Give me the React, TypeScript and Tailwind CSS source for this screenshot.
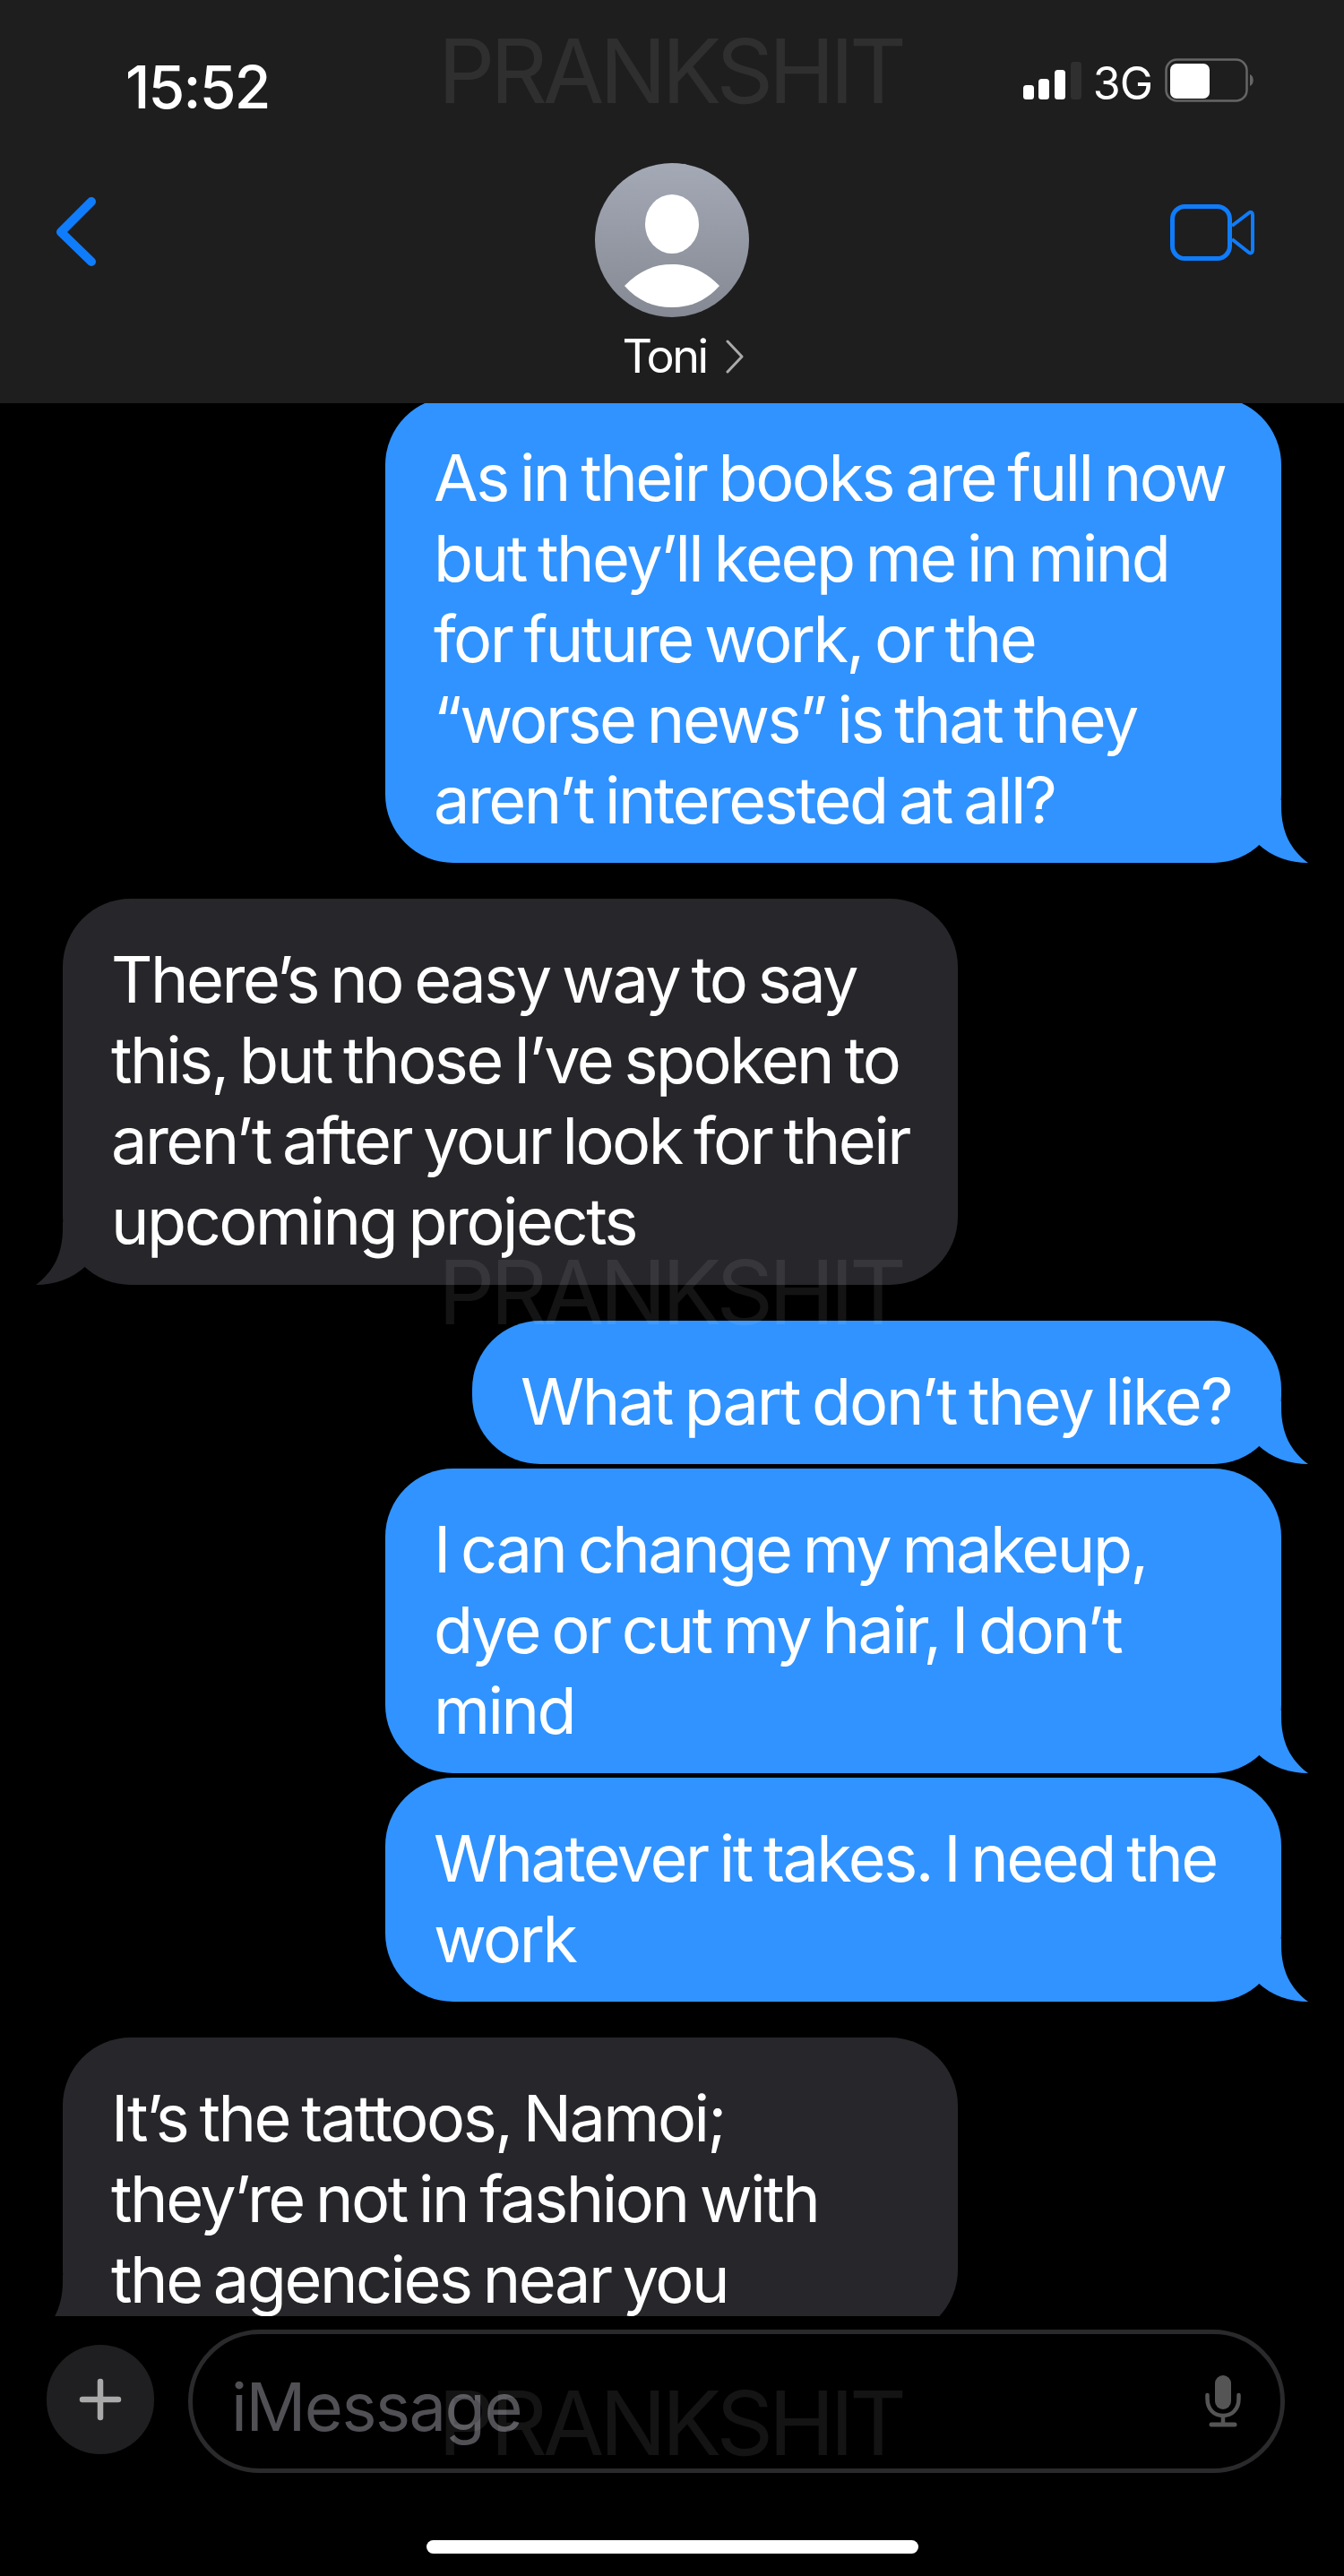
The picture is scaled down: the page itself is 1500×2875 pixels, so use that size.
const F = { fontFamily: 'Inter, "Liberation Sans", sans-serif' };

function Tail({ side, color }: { side: "left" | "right"; color: string }) {
  return (
    <svg
      className={`absolute bottom-0 ${side === "right" ? "right-[-30px]" : "left-[-30px] -scale-x-100"}`}
      width="120"
      height="70"
      viewBox="0 0 120 70"
    >
      <path d="M0 0 L90 0 L90 7 C90 35 100 55 120 70 C100 70 80 64 63 48 C52 60 30 70 7 70 L0 70 Z" fill={color} />
    </svg>
  );
}

function Bubble({ me, lines, className = "" }: { me?: boolean; lines: string[]; className?: string }) {
  const color = me ? "#3093ff" : "#26262b";
  return (
    <div
      className={`relative shrink-0 rounded-[76px] pt-[45px] pb-[25px] pl-[54px] text-[72px] leading-[90px] text-white whitespace-nowrap [word-spacing:-4.5px] ${
        me ? "self-end bg-[#3093ff]" : "self-start bg-[#26262b]"
      } ${className}`}
    >
      <Tail side={me ? "right" : "left"} color={color} />
      <div className="relative">
        {lines.map((l) => (
          <div key={l}>{l}</div>
        ))}
      </div>
    </div>
  );
}

function Watermark({ className }: { className: string }) {
  return (
    <div className={`pointer-events-none absolute left-[489px] z-20 text-[99px] leading-[100px] tracking-[-5px] text-white/[0.08] ${className}`}>
      PRANKSHIT
    </div>
  );
}

export default function App() {
  return (
    <div className="relative flex h-[2875px] w-[1500px] flex-col overflow-hidden bg-black" style={F}>
      <header className="relative z-10 h-[450px] shrink-0 bg-[#1e1e1e]">
        <div className="flex h-[180px] items-start justify-between pl-[140px] pr-[100px] pt-[60px] text-white">
          <span className="text-[66px] leading-[74px] font-medium tracking-[-1.8px]">15:52</span>
          <div className="mt-[5px] flex items-start">
            <svg width="66" height="42" viewBox="0 0 66 42" className="mt-[4px]">
              <rect x="0" y="26" width="12" height="16" rx="3.5" fill="#fff" />
              <rect x="17" y="19" width="12" height="23" rx="3.5" fill="#fff" />
              <rect x="35" y="9" width="12" height="33" rx="3.5" fill="#fff" />
              <rect x="53" y="0" width="12" height="42" rx="3.5" fill="#2f2f2f" />
            </svg>
            <span className="ml-[12px] mt-[3px] text-[50px] leading-[50px] tracking-[-1px]">3G</span>
            <svg width="100" height="49" viewBox="0 0 100 49" className="ml-[14px]">
              <rect x="1.500" y="1.500" width="90" height="46" rx="12" fill="none" stroke="#666" strokeWidth="2.500" />
              <rect x="6" y="6" width="44" height="39" rx="7" fill="#fff" />
              <path d="M95 18 C100 20 100 29 95 31 Z" fill="#666" />
            </svg>
          </div>
        </div>
        <div className="grid h-[270px] grid-cols-[1fr_auto_1fr] items-start">
          <svg width="50" height="85" viewBox="0 0 50 85" className="ml-[60px] mt-[35px]">
            <path d="M42 10 L8 44 L42 77" fill="none" stroke="#0f7cfb" strokeWidth="10" strokeLinecap="round" strokeLinejoin="round" />
          </svg>
          <div className="mt-[2px] flex flex-col items-center">
            <svg width="172" height="172" viewBox="0 0 172 172">
              <defs>
                <linearGradient id="avatar" x1="0" y1="0" x2="0" y2="1">
                  <stop offset="0" stopColor="#a4a9b6" />
                  <stop offset="1" stopColor="#858993" />
                </linearGradient>
              </defs>
              <circle cx="86" cy="86" r="86" fill="url(#avatar)" />
              <ellipse cx="86" cy="68" rx="30" ry="33" fill="#fff" />
              <path d="M33 137 C50 120 66 113 86 113 C106 113 122 120 139 137 C124 154 106 161 86 161 C66 161 48 154 33 137 Z" fill="#fff" />
            </svg>
            <div className="mt-[14px] flex items-center pl-[24px] text-[52px] leading-[60px] tracking-[-2.500px] text-white">
              Toni
              <svg width="20" height="38" viewBox="0 0 20 38" className="ml-[21px]">
                <path d="M2 2 L18 19 L2 36" fill="none" stroke="#aaa" strokeWidth="3" strokeLinecap="round" strokeLinejoin="round" />
              </svg>
            </div>
          </div>
          <svg width="96" height="63" viewBox="0 0 96 63" className="mr-[100px] mt-[48px] justify-self-end">
            <rect x="4.500" y="2.500" width="64" height="58" rx="14" fill="none" stroke="#0f7cfb" strokeWidth="5" />
            <path d="M71 24 L90 9.500 C92 8 94 9 94 12 L94 51 C94 54 92 55 90 54 L71 39" fill="none" stroke="#0f7cfb" strokeWidth="4" strokeLinejoin="round" />
          </svg>
        </div>
      </header>

      <main className="flex h-[2135px] shrink-0 flex-col overflow-hidden px-[70px]">
        <Bubble me className="mt-[-7px] w-[1000px] tracking-[-2.500px]" lines={["As in their books are full now", "but they’ll keep me in mind", "for future work, or the", "“worse news” is that they", "aren’t interested at all?"]} />
        <Bubble className="mt-[40px] h-[431px] w-[999px] tracking-[-2.500px]" lines={["There’s no easy way to say", "this, but those I’ve spoken to", "aren’t after your look for their", "upcoming projects"]} />
        <Bubble me className="mt-[40px] w-[903px] tracking-[-2.100px]" lines={["What part don’t they like?"]} />
        <Bubble me className="mt-[5px] w-[1000px] tracking-[-2.500px]" lines={["I can change my makeup,", "dye or cut my hair, I don’t", "mind"]} />
        <Bubble me className="mt-[5px] h-[250px] w-[1000px] tracking-[-2.500px]" lines={["Whatever it takes. I need the", "work"]} />
        <Bubble className="mt-[40px] h-[335px] w-[999px] tracking-[-2.500px]" lines={["It’s the tattoos, Namoi;", "they’re not in fashion with", "the agencies near you"]} />
      </main>

      <footer className="flex flex-col">
        <div className="flex items-start pl-[52px] pt-[15px]">
          <div className="mt-[17px] flex h-[122px] w-[120px] shrink-0 items-center justify-center rounded-full bg-[#1f1f21]">
            <svg width="50" height="50" viewBox="0 0 50 50">
              <path d="M25 5 V45 M5 25 H45" stroke="#a9a9a9" strokeWidth="6.500" strokeLinecap="round" />
            </svg>
          </div>
          <div className="ml-[38px] flex h-[160px] w-[1224px] items-center justify-between rounded-[80px] border-[5px] border-[#2a2a2c] pl-[43px] pr-[42px]">
            <span className="mt-[12px] text-[74px] leading-[80px] tracking-[-1.500px] text-[#505055]">iMessage</span>
            <svg width="44" height="58" viewBox="0 0 44 58">
              <rect x="13" y="0" width="18" height="38" rx="9" fill="#555" />
              <path d="M4.500 22 V26 C4.500 38 12 45 22 45 C32 45 39.500 38 39.500 26 V22" fill="none" stroke="#555" strokeWidth="4.500" strokeLinecap="round" />
              <path d="M22 45 V54" stroke="#555" strokeWidth="4.500" />
              <path d="M9 55 H35" stroke="#555" strokeWidth="5" strokeLinecap="round" />
            </svg>
          </div>
        </div>
        <div className="mx-auto mt-[75px] h-[15px] w-[549px] rounded-full bg-white" />
      </footer>

      <Watermark className="top-[29px]" />
      <Watermark className="top-[1392px]" />
      <Watermark className="top-[2654px]" />
    </div>
  );
}
